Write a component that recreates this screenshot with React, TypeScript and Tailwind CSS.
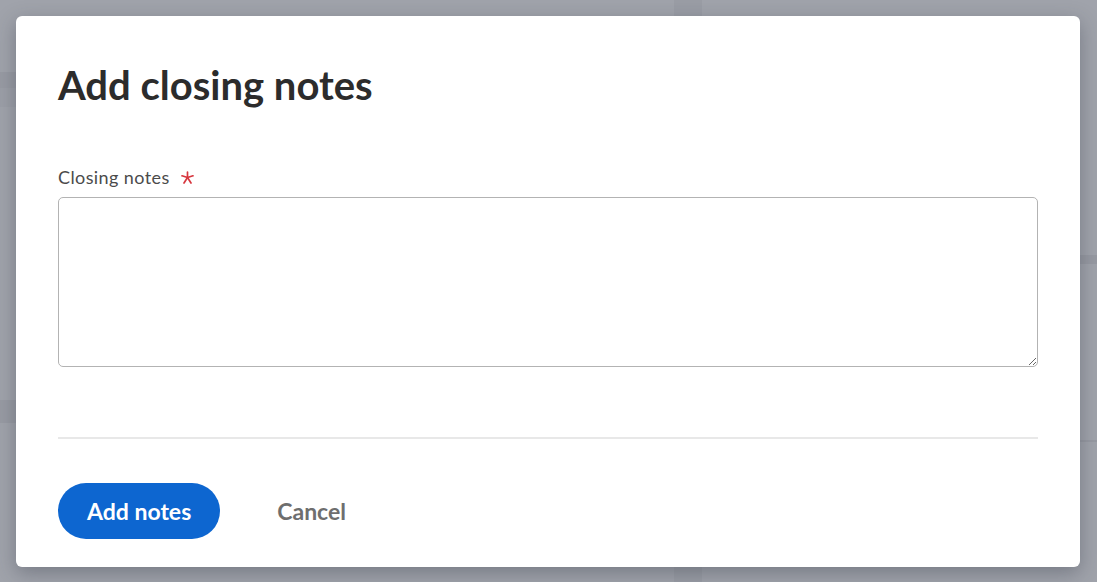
import { useState } from "react";

// faint page that sits behind the modal overlay
const BackdropPage = () => {
  return (
    <div className="flex h-[582px] w-full bg-[#a0a3ab]">
      <div className="flex w-[674px] flex-col">
        <div className="h-[72px]" />
        <div className="h-[16px] bg-[#989ba3]" />
        <div className="h-[19px] bg-[#9c9fa7]" />
        <div className="h-[293px]" />
        <div className="h-[23px] bg-[#989ba3]" />
        <div className="flex-1" />
      </div>
      <div className="w-[28px] bg-[#9a9da5]" />
      <div className="flex flex-1 flex-col">
        <div className="h-[255px]" />
        <div className="h-[9px] bg-[#979aa2]" />
        <div className="h-[176px]" />
        <div className="h-[2px] bg-[#979aa2]" />
        <div className="flex-1" />
      </div>
    </div>
  );
};

const RequiredMark = () => (
  <svg width="13" height="13" viewBox="0 0 13 13" className="mt-[1px]">
    <g stroke="#d7373f" strokeWidth="1.7" strokeLinecap="round">
      <line x1="6.5" y1="1" x2="6.5" y2="6.5" />
      <line x1="1" y1="4.8" x2="6.5" y2="6.5" />
      <line x1="12" y1="4.8" x2="6.5" y2="6.5" />
      <line x1="3" y1="12" x2="6.5" y2="6.5" />
      <line x1="10" y1="12" x2="6.5" y2="6.5" />
    </g>
  </svg>
);

const App = () => {
  const [notes, setNotes] = useState("");

  return (
    <div className="relative h-[582px] w-full overflow-hidden" style={{ fontFamily: "Lato, 'Open Sans', sans-serif" }}>
      <BackdropPage />

      {/* modal overlay */}
      <div className="absolute inset-0 flex pt-4 pb-[15px] pl-4 pr-[17px]">
        <div className="flex flex-1 flex-col rounded-[6px] bg-white px-[42px] shadow-[0_6px_20px_rgba(40,46,60,0.35)]">
          <h2 className="mt-[45px] text-[40px] leading-[48px] font-bold tracking-[0px] text-[#2c2c2c]">
            Add closing notes
          </h2>

          <label className="mt-[57px] flex items-center gap-[11px] text-[18px] leading-[22px] tracking-[0.4px] text-[#4b4b4b]">
            Closing notes
            <RequiredMark />
          </label>
          <textarea
            value={notes}
            onChange={(e) => setNotes(e.target.value)}
            className="mt-[9px] h-[170px] w-full rounded-[5px] border border-[#b3b3b3] bg-white px-3 py-2 text-[17px] text-[#2c2c2c] outline-none"
          />

          <div className="mt-[70px] h-[2px] w-full bg-[#e8e8e8]" />

          <div className="mt-[44px] flex items-center gap-[28px]">
            <button className="h-[56px] rounded-full bg-[#0d66d0] px-[29px] text-[23px] font-bold text-white">
              Add notes
            </button>
            <button className="h-[56px] rounded-full px-[29px] text-[23px] font-bold text-[#6e6e6e]">
              Cancel
            </button>
          </div>
        </div>
      </div>
    </div>
  );
};

export default App;
